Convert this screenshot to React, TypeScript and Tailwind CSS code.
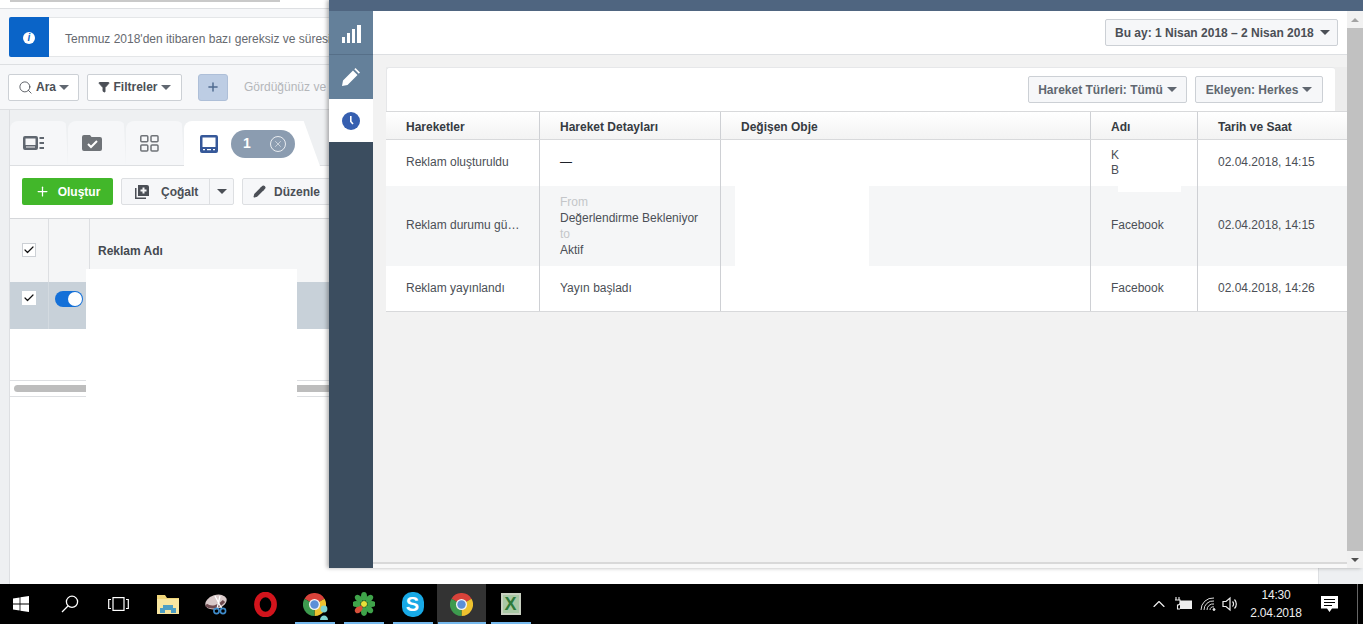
import { ChevronUp, Plus, Search, Pencil, Funnel, X, Check } from "lucide-react";
import { ReactNode } from "react";

const Caret = ({ className = "border-t-[#606770]" }: { className?: string }) => (
  <span className={`inline-block w-0 h-0 border-x-[5px] border-x-transparent border-t-[5px] ${className}`} />
);

const Chrome = ({ size = 32 }: { size?: number }) => (
  <svg width={size} height={size} viewBox="0 0 24 24">
    <path d="M12 12L1.6 6A12 12 0 0 1 22.4 6Z" fill="#d8423a" />
    <path d="M12 12L22.4 6A12 12 0 0 1 12 24Z" fill="#eec22f" />
    <path d="M12 12L12 24A12 12 0 0 1 1.6 6Z" fill="#3d9a4e" />
    <circle cx="12" cy="12" r="5.8" fill="#f4f4f4" />
    <circle cx="12" cy="12" r="4.4" fill="#5c8fd8" />
  </svg>
);

const taskIcons: ReactNode[] = [
  <svg width="16" height="16" viewBox="0 0 16 16" fill="#fff"><path d="M0 2.4 6.6 1.4V7.5H0ZM7.4 1.3 16 0V7.5H7.4ZM0 8.4H6.6V14.6L0 13.6ZM7.4 8.4H16V16L7.4 14.7Z" /></svg>,
  <svg width="18" height="18" viewBox="0 0 18 18" fill="none" stroke="#fff" strokeWidth="1.3"><circle cx="11" cy="6.8" r="5.6" /><path d="M7 11 1 17" /></svg>,
  <svg width="21" height="14" viewBox="0 0 21 14" fill="none" stroke="#fff" strokeWidth="1.2"><rect x="5" y=".6" width="11" height="12.8" /><path d="M3 2.5H.7V11.5H3M18 2.5H20.3V11.5H18" /></svg>,
  <svg width="22" height="19" viewBox="0 0 22 19"><path d="M0 0H8L10 3H22V19H0Z" fill="#f0d67a" /><path d="M0 4H22V19H0Z" fill="#f8e6a0" /><path d="M6 13V10H16V13H19V18H14V15H8V18H3V13Z" fill="#4e9fc4" /></svg>,
  <svg width="24" height="22" viewBox="0 0 24 22"><ellipse cx="11" cy="9" rx="11" ry="7" transform="rotate(-18 11 9)" fill="#d8c8c8" /><path d="M1 12C6 16 14 14 19 8" stroke="#6e4a4f" strokeWidth="3" fill="none" /><path d="M10 3 17 16M15 3 12 16" stroke="#fff" strokeWidth="1.3" /><circle cx="11.5" cy="18" r="2.6" fill="none" stroke="#3f8ccc" strokeWidth="1.6" /><circle cx="18" cy="18" r="2.6" fill="none" stroke="#3f8ccc" strokeWidth="1.6" /></svg>,
  <svg width="23" height="25" viewBox="0 0 23 25"><ellipse cx="11.5" cy="12.5" rx="8.6" ry="10" fill="none" stroke="#d2141c" strokeWidth="5.6" /></svg>,
  <div className="relative flex"><Chrome size={23} /><svg className="absolute -right-1 -bottom-1" width="12" height="15" viewBox="0 0 12 15"><circle cx="6" cy="4" r="3.4" fill="#7fd4d0" /><path d="M2 15C2 9 10 9 10 15Z" fill="#7fd4d0" /></svg></div>,
  <svg width="22" height="24" viewBox="-11 -12 22 24">
    {[0, 45, 90, 135, 180, 225, 270, 315].map((a) => (
      <ellipse key={a} cx="0" cy="-7.5" rx="3" ry="4.4" transform={`rotate(${a})`} fill={a === 225 ? "#d8503a" : "#3fa34a"} />
    ))}
    <circle r="3" fill="#e6e23a" />
  </svg>,
  <div className="w-[22px] h-[25px] rounded-[10px] bg-[#18a9e6] flex items-center justify-center text-white font-bold text-[20px] leading-none">S</div>,
  <Chrome size={23} />,
  <div className="w-5 h-[22px] border-2 border-[#c8d0c0] bg-[#a9c8a4] flex items-center justify-center text-[#2e7a3a] font-bold text-[18px] leading-none">X</div>,
];

const underlined = [6, 7, 8, 9, 10];

const Row = ({ bg, h, cells }: { bg: string; h: string; cells: ReactNode[] }) => (
  <div className={`grid grid-cols-[154px_181px_370px_107px_1fr] ${bg} ${h}`}>
    {cells.map((c, i) => (
      <div key={i} className="border-r last:border-r-0 border-[#ced0d4] flex items-center pl-5 min-w-0 relative">{c}</div>
    ))}
  </div>
);

// cell text sits 1px above centre in the reference
const T = ({ children }: { children: ReactNode }) => <span className="whitespace-nowrap -mt-[2px]">{children}</span>;

export default function App() {
  return (
    <div className="relative w-[1363px] h-[624px] overflow-hidden flex flex-col text-[12px] text-[#4b4f56] [font-family:'Liberation_Sans',Arial,sans-serif]">
      {/* page behind the panel */}
      <div className="h-[584px] bg-[#eef0f2] flex flex-col">
        <div className="h-[9px] bg-white border-b border-[#dddfe2] pl-[10px] shrink-0">
          <div className="w-[270px] h-[2px] bg-[#c9c9c9]" />
        </div>
        <div className="h-[56px] shrink-0 bg-[#f6f7f9] border-b border-[#dddfe2] pt-2 pl-[9px]">
          <div className="h-[40px] bg-white flex items-center border-y border-[#e4e6e8] rounded-l-[2px]">
            <div className="w-10 h-[40px] bg-[#0a64c8] flex items-center justify-center rounded-l-[2px]">
              <span className="w-3 h-3 mt-[2px] rounded-full bg-white text-[#0a64c8] text-[10px] leading-3 font-bold text-center italic">i</span>
            </div>
            <span className="ml-4 mt-1 whitespace-nowrap text-[#666a70]">Temmuz 2018'den itibaren bazı gereksiz ve süresi dolmuş</span>
          </div>
        </div>
        <div className="h-[45px] shrink-0 bg-[#f6f7f9] border-b border-[#dddfe2] flex items-center gap-2 pl-2">
          <div className="h-[27px] w-[71px] bg-white border border-[#ccd0d5] rounded-[2px] flex items-center justify-center gap-[3px] font-bold">
            <Search size={15} strokeWidth={1.4} /> Ara <Caret />
          </div>
          <div className="h-[27px] w-[95px] bg-white border border-[#ccd0d5] rounded-[2px] flex items-center justify-center gap-[3px] font-bold">
            <Funnel size={12} fill="#4b4f56" /> Filtreler <Caret />
          </div>
          <div className="ml-2 h-[27px] w-[30px] bg-[#bdcde4] border border-[#aebfd8] rounded-[3px] flex items-center justify-center text-[#4f6a8f]">
            <Plus size={14} strokeWidth={2.5} />
          </div>
          <span className="ml-[8px] text-[#b4b6ba] whitespace-nowrap">Gördüğünüz ve</span>
        </div>
        <div className="ml-[9px] flex-1 flex flex-col bg-white border-l border-[#dddfe2]">
          <div className="bg-[#eef0f2] pt-[11px] h-[56px] shrink-0 flex border-b border-[#dddfe2]">
            <div className="w-[58px] h-[44px] rounded-t-lg bg-[#f6f7f9] flex items-center justify-center pr-[10px] [clip-path:polygon(0_0,96%_0,100%_100%,0_100%)]">
              <svg width="22" height="14" viewBox="0 0 22 14" fill="#606770"><path d="M2 0H13A2 2 0 0 1 15 2V12A2 2 0 0 1 13 14H2A2 2 0 0 1 0 12V2A2 2 0 0 1 2 0ZM2.5 2.5V9H12.5V2.5ZM3 10.5V11.5H12V10.5ZM16.5 1H21V3H16.5ZM16.5 6H21V8H16.5ZM16.5 11H21V13H16.5Z" fillRule="evenodd" /></svg>
            </div>
            <div className="w-[58px] h-[44px] rounded-t-lg bg-[#f6f7f9] flex items-center justify-center pr-[10px] [clip-path:polygon(0_0,96%_0,100%_100%,0_100%)]">
              <svg width="20" height="16" viewBox="0 0 20 16"><path d="M2 0H8L9.5 2H18A2 2 0 0 1 20 4V14A2 2 0 0 1 18 16H2A2 2 0 0 1 0 14V2A2 2 0 0 1 2 0Z" fill="#6f7378" /><path d="M6 9 9 12 15 6" stroke="#fff" strokeWidth="2" fill="none" /></svg>
            </div>
            <div className="w-[58px] h-[44px] rounded-t-lg bg-[#f6f7f9] flex items-center justify-center pr-[12px] [clip-path:polygon(0_0,96%_0,100%_100%,0_100%)]">
              <svg width="19" height="17" viewBox="0 0 19 17" fill="none" stroke="#6f7378" strokeWidth="1.5"><rect x=".8" y=".8" width="7" height="6" rx="1" /><rect x="11" y=".8" width="7" height="6" rx="1" /><rect x=".8" y="10" width="7" height="6" rx="1" /><rect x="11" y="10" width="7" height="6" rx="1" /></svg>
            </div>
            <div className="w-[136px] h-[45px] rounded-t-lg bg-white flex items-center pl-4 [clip-path:polygon(0_0,88%_0,100%_100%,0_100%)]">
              <svg width="18" height="18" viewBox="0 0 18 18" fill="#365899"><path d="M2 0H16A2 2 0 0 1 18 2V16A2 2 0 0 1 16 18H2A2 2 0 0 1 0 16V2A2 2 0 0 1 2 0ZM2.5 2.5V12H15.5V2.5ZM3 14V15.2H5V14ZM7 14V15.2H11V14ZM13 14V15.2H15V14Z" fillRule="evenodd" /></svg>
              <div className="ml-[13px] w-[64px] h-[28px] rounded-full bg-[#8b9cb0] flex items-center justify-between pl-3 pr-[9px] text-white">
                <span className="font-bold text-[14px]">1</span>
                <span className="w-4 h-4 rounded-full border border-white/80 flex items-center justify-center"><X size={10} strokeWidth={1.3} /></span>
              </div>
            </div>
          </div>
          <div className="h-[53px] shrink-0 flex items-center pl-[12px] gap-2 -mt-px">
            <div className="h-[27px] w-[91px] bg-[#42b72a] rounded-[2px] text-white font-bold flex items-center justify-center gap-2">
              <Plus size={15} strokeWidth={2} /> Oluştur
            </div>
            <div className="h-[27px] w-[113px] bg-[#f6f7f9] border border-[#dddfe2] rounded-[2px] flex items-center font-bold">
              <span className="flex items-center gap-3 pl-[13px] w-[88px] border-r border-[#dddfe2] h-full">
                <svg width="14" height="14" viewBox="0 0 14 14" fill="#4b4f56"><path d="M3 0H12A2 2 0 0 1 14 2V11H3ZM7.5 2.5V4.5H5.5V6.5H7.5V8.5H9.5V6.5H11.5V4.5H9.5V2.5ZM0 3H1.5V12.5H11V14H0Z" fillRule="evenodd" /></svg>
                Çoğalt
              </span>
              <span className="flex-1 flex justify-center"><Caret className="border-t-[#4b4f56]" /></span>
            </div>
            <div className="h-[27px] w-[100px] shrink-0 bg-[#f6f7f9] border border-[#dddfe2] rounded-[2px] flex items-center gap-2 pl-[10px] font-bold">
              <Pencil size={13} fill="#4b4f56" /> Düzenle
            </div>
          </div>
          <div className="h-[65px] shrink-0 bg-[#f5f6f7] border-y border-[#d5d7da] flex">
            <div className="w-[39px] border-r border-[#dddfe2] flex items-center justify-center pb-px">
              <span className="w-[14px] h-[14px] bg-white border border-[#ccd0d5] flex items-center justify-center text-[#111]"><Check size={12} strokeWidth={2.4} /></span>
            </div>
            <div className="w-[41px] border-r border-[#dddfe2]" />
            <div className="pl-2 flex items-center font-bold text-[#444950]">Reklam Adı</div>
          </div>
          <div className="h-[47px] shrink-0 bg-[#c8d1d9] flex -mt-px">
            <div className="w-[39px] border-r border-[#d3dae0] flex justify-center pt-[9px]">
              <span className="w-[14px] h-[14px] bg-white flex items-center justify-center text-[#111]"><Check size={12} strokeWidth={2.4} /></span>
            </div>
            <div className="pl-[6px] pt-[9px]">
              <div className="w-[28px] h-4 rounded-full bg-[#1470d8] flex justify-end items-center pr-px">
                <span className="w-[14px] h-[14px] rounded-full bg-white" />
              </div>
            </div>
          </div>
          <div className="h-[51px] shrink-0" />
          <div className="h-[17px] shrink-0 border-y border-[#dddfe2] flex items-center pl-1">
            <div className="w-[320px] h-[7px] rounded-full bg-[#bdbdbd]" />
          </div>
          <div className="flex-1 flex justify-end">
            <div className="w-[45px] bg-[#eef0f2] border-l border-[#dddfe2]" />
          </div>
        </div>
      </div>

      {/* blanked out in the source screenshot */}
      <div className="absolute left-[86px] top-[269px] w-[211px] h-[128px] bg-white" />

      {/* side panel */}
      <div className="absolute left-[329px] top-0 w-[1034px] h-[568px] flex flex-col shadow-[-2px_0_4px_rgba(0,0,0,0.3)]">
        <div className="h-[11px] shrink-0 bg-[#4f6580]" />
        <div className="flex-1 flex min-h-0">
          <div className="w-[44px] shrink-0 bg-[#3b4d5f] flex flex-col">
            <div className="h-[44px] bg-[#64809a] border-b border-[#566f88] flex items-center justify-center pt-[2px]">
              <svg width="19" height="18" viewBox="0 0 19 18" fill="#fff"><path d="M0 12H3V18H0ZM5 8H8V18H5ZM10 4H13V18H10ZM15 0H19V18H15Z" /></svg>
            </div>
            <div className="h-[44px] bg-[#64809a] flex items-center justify-center">
              <svg width="18" height="18" viewBox="0 0 18 18" fill="#fff"><path d="M0 18 1 12.5 11 2.5 15.500 7 5.500 17ZM12.300 1.200 13.500 0 18 4.500 16.800 5.700Z" /></svg>
            </div>
            <div className="h-[43px] bg-white flex items-center justify-center">
              <svg width="18" height="18" viewBox="0 0 18 18"><circle cx="9" cy="9" r="9" fill="#365fb0" /><path d="M8.800 4V9.500L11 12" stroke="#fff" strokeWidth="1.6" fill="none" /></svg>
            </div>
          </div>
          <div className="flex-1 min-w-0 bg-[#f2f2f2] flex flex-col">
            <div className="h-[44px] shrink-0 bg-white border-b border-[#dddfe2] flex items-center justify-end pr-[9px]">
              <div className="h-[27px] w-[233px] bg-[#f6f7f9] border border-[#ccd0d5] rounded-[2px] font-bold flex items-center justify-between pl-[9px] pr-[7px] whitespace-nowrap">
                Bu ay: 1 Nisan 2018 – 2 Nisan 2018 <Caret className="border-t-[#4b4f56]" />
              </div>
            </div>
            <div className="mt-3 ml-[13px] h-[44px] shrink-0 bg-[#ededed] flex">
              <div className="w-[949px] bg-white rounded-t-[3px] border-t border-l border-[#e6e7e9] flex items-center justify-end gap-2 pr-3">
                <div className="h-[27px] w-[159px] bg-[#f6f7f9] border border-[#ccd0d5] rounded-[2px] font-bold text-[#606770] flex items-center justify-center gap-1 whitespace-nowrap">
                  Hareket Türleri: Tümü <Caret />
                </div>
                <div className="h-[27px] w-[128px] bg-[#f6f7f9] border border-[#ccd0d5] rounded-[2px] font-bold text-[#606770] flex items-center justify-center gap-1 whitespace-nowrap">
                  Ekleyen: Herkes <Caret />
                </div>
              </div>
            </div>
            <div className="ml-[13px] shrink-0 border-y border-[#d8d9db] bg-white text-[#4b4f56]">
              <div className="grid grid-cols-[154px_181px_370px_107px_1fr] h-[28px] border-b border-[#d8d9db] bg-gradient-to-b from-white to-[#f3f3f3] font-bold text-[#363b42]">
                {["Hareketler", "Hareket Detayları", "Değişen Obje", "Adı", "Tarih ve Saat"].map((t) => (
                  <div key={t} className="border-r last:border-r-0 border-[#ced0d4] flex items-center pl-5 pt-[2px] whitespace-nowrap">{t}</div>
                ))}
              </div>
              <Row
                bg="bg-white"
                h="h-[46px]"
                cells={[
                  <T>Reklam oluşturuldu</T>,
                  <T><span className="text-[#1d2129]">—</span></T>,
                  null,
                  <div className="leading-[15px]">K<br />B<span className="absolute left-[27px] top-[46px] w-[63px] h-[6px] bg-white" /></div>,
                  <T>02.04.2018, 14:15</T>,
                ]}
              />
              <Row
                bg="bg-[#f5f6f7]"
                h="h-[80px]"
                cells={[
                  <T>Reklam durumu gü…</T>,
                  <div className="leading-4 whitespace-nowrap">
                    <div className="text-[#c4c6c9]">From</div>
                    <div>Değerlendirme Bekleniyor</div>
                    <div className="text-[#c4c6c9]">to</div>
                    <div>Aktif</div>
                  </div>,
                  <div className="bg-white w-[134px] h-full -ml-[6px]" />,
                  <T>Facebook</T>,
                  <T>02.04.2018, 14:15</T>,
                ]}
              />
              <Row
                bg="bg-white"
                h="h-[45px]"
                cells={[
                  <T>Reklam yayınlandı</T>,
                  <T>Yayın başladı</T>,
                  null,
                  <T>Facebook</T>,
                  <T>02.04.2018, 14:26</T>,
                ]}
              />
            </div>
            <div className="flex-1" />
            <div className="h-[2px] shrink-0 bg-[#d9d9d9]" />
            <div className="h-[4px] shrink-0 bg-[#f8f8f8]" />
          </div>
          <div className="w-4 shrink-0 bg-[#f1f1f1] flex flex-col items-center">
            <div className="h-[17px] shrink-0 flex items-center justify-center">
              <span className="w-0 h-0 border-x-4 border-x-transparent border-b-4 border-b-[#a3a3a3]" />
            </div>
            <div className="flex-1 w-full bg-[#c1c1c1]" />
            <div className="h-[17px] shrink-0 flex items-center justify-center">
              <span className="w-0 h-0 border-x-4 border-x-transparent border-t-4 border-t-[#505050]" />
            </div>
          </div>
        </div>
      </div>

      {/* taskbar */}
      <div className="h-[40px] shrink-0 bg-black flex items-stretch text-white">
        <div className="flex -ml-[4px]">
          {taskIcons.map((icon, i) => (
            <div key={i} className={`w-[49px] relative flex items-center justify-center ${i === 9 ? "bg-[#333]" : ""}`}>
              {icon}
              {underlined.includes(i) && (
                <span className={`absolute bottom-0 h-[2px] bg-[#76b9ed] ${i === 9 ? "w-[48px]" : "w-10"}`} />
              )}
            </div>
          ))}
        </div>
        <div className="ml-auto flex items-center pr-[5px]">
          <ChevronUp size={20} strokeWidth={1.4} className="mr-[5px] text-[#eee]" />
          <svg className="mr-[8px]" width="18" height="14" viewBox="0 0 18 14" fill="none" stroke="#eee"><path d="M2 0V3M5 0V3M1 3H6V6C6 8 4 8 3.500 8V12H6" strokeWidth="1.1" /><rect x="6.500" y="4" width="11" height="7.500" fill="#eee" /></svg>
          <svg className="mr-[5px]" width="17" height="14" viewBox="0 0 17 14" fill="none" stroke="#ddd" strokeWidth="1"><path d="M1 13A12 12 0 0 1 14 1M4 13A9 9 0 0 1 14 4M7 13A6 6 0 0 1 14 7M10 13A3 3 0 0 1 14 10" /><circle cx="14" cy="12.500" r="1" fill="#fff" /></svg>
          <svg className="mr-[7px]" width="17" height="16" viewBox="0 0 17 16" fill="none" stroke="#eee" strokeWidth="1.200"><path d="M1 5.500H4L8 2V14L4 10.500H1Z" /><path d="M10.500 5.500A3.500 3.500 0 0 1 10.500 10.500M12.500 3.500A6.500 6.500 0 0 1 12.500 12.500" /></svg>
          <div className="w-[60px] text-center text-[12px] leading-[18px] text-[#eee] tracking-[-0.2px]">
            <div>14:30</div>
            <div>2.04.2018</div>
          </div>
          <svg className="ml-[15px] mr-[19px]" width="17" height="16" viewBox="0 0 17 16" fill="#fff"><path fillRule="evenodd" d="M0 0H17V12.500H11L8.500 16 6 12.500H0ZM3 3V4H14V3ZM3 6V7H14V6ZM3 9V10H11V9Z" /></svg>
          <span className="w-px h-full bg-[#666]" />
        </div>
      </div>
    </div>
  );
}
